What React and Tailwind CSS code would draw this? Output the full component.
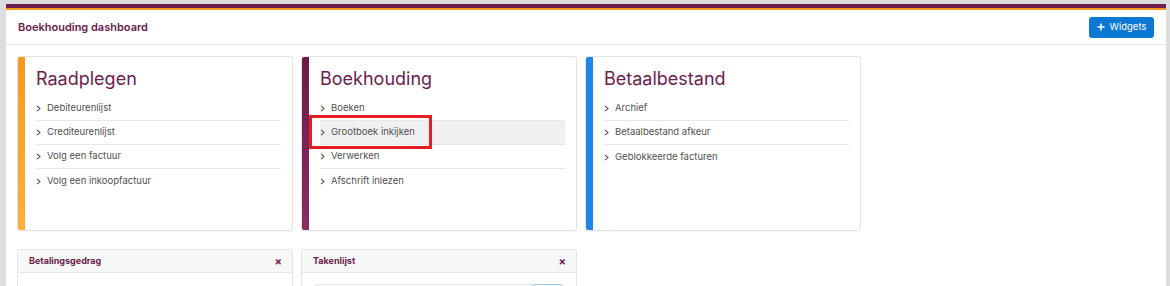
import React from 'react';

const groups = [
  {
    title: 'Raadplegen',
    bar: 'bg-gradient-to-b from-[#f59a1c] to-[#fbb03b]',
    items: ['Debiteurenlijst', 'Crediteurenlijst', 'Volg een factuur', 'Volg een inkoopfactuur'],
  },
  {
    title: 'Boekhouding',
    bar: 'bg-gradient-to-b from-[#6a1a4a] to-[#8a2c62]',
    items: ['Boeken', 'Grootboek inkijken', 'Verwerken', 'Afschrift inlezen'],
    active: 1,
  },
  {
    title: 'Betaalbestand',
    bar: 'bg-[#1d86e8]',
    items: ['Archief', 'Betaalbestand afkeur', 'Geblokkeerde facturen'],
  },
];

const Chevron = () => (
  <svg width="5" height="7" viewBox="0 0 5 7" className="shrink-0">
    <polyline points="1,0.8 4,3.5 1,6.2" fill="none" stroke="#555" strokeWidth="1.1" />
  </svg>
);

const GroupCard = ({ group }) => (
  <div className="w-[276px] h-[175px] flex rounded-[3px] border border-[#e3e3e3] bg-white overflow-hidden shadow-[0_1px_2px_rgba(0,0,0,0.04)]">
    <div className={`w-[7px] shrink-0 ${group.bar}`} />
    <div className="flex-1 pl-[11px] pr-[11px] pt-[10px]">
      <h2 className="text-[18px] leading-[24px] text-[#6b1d4c] mb-[6px]">{group.title}</h2>
      <ul>
        {group.items.map((item, i) => (
          <li
            key={item}
            className={`relative h-[24px] flex items-center gap-[6px] text-[9.5px] text-[#505050] ${
              i < group.items.length - 1 ? 'border-b border-[#e6e6e6]' : ''
            } ${group.active === i ? 'bg-[#f0f0f0]' : ''}`}
          >
            <Chevron />
            <span>{item}</span>
            {group.active === i && (
              <div className="absolute left-[-11px] top-[-6px] w-[123px] h-[34px] border-[3px] border-[#e31e24]" />
            )}
          </li>
        ))}
      </ul>
    </div>
  </div>
);

const WidgetCard = ({ title, children }) => (
  <div className="w-[276px] rounded-[3px] border border-[#e3e3e3] bg-white overflow-hidden">
    <div className="h-[23px] flex items-center justify-between pl-[11px] pr-[10px] bg-[#f7f7f7] border-b border-[#e6e6e6]">
      <span className="text-[9px] font-bold text-[#6b1d4c]">{title}</span>
      <span className="text-[11px] font-bold text-[#6b1d4c] leading-none">×</span>
    </div>
    <div className="h-[40px] px-[13px] pt-[11px]">{children}</div>
  </div>
);

export default function App() {
  return (
    <div className="h-[286px] overflow-hidden bg-[#dcdddf] pt-[4px] pl-[6px] pr-[4px]" style={{ fontFamily: 'Inter, "Noto Sans", sans-serif' }}>
      <div className="bg-white h-full">
        <div className="h-[4px] bg-[#6d1f4f]" />
        <div className="h-[2px] bg-[#f39a1e]" />
        <div className="h-[35px] flex items-center justify-between px-3 border-b border-[#e3e3e3]">
          <h1 className="text-[11px] font-semibold text-[#6b1d4c]">Boekhouding dashboard</h1>
          <button className="h-[21px] w-[65px] flex items-center justify-center gap-[5px] rounded-[3px] bg-[#0b78d4] text-white text-[9.5px]">
            <svg width="8" height="8" viewBox="0 0 8 8">
              <path d="M4 0.5v7M0.5 4h7" stroke="white" strokeWidth="1.5" />
            </svg>
            Widgets
          </button>
        </div>
        <div className="pt-[11px] pl-[11px]">
          <div className="flex gap-2">
            {groups.map((g) => (
              <GroupCard key={g.title} group={g} />
            ))}
          </div>
          <div className="flex gap-2 mt-[18px]">
            <WidgetCard title="Betalingsgedrag" />
            <WidgetCard title="Takenlijst">
              <div className="flex">
                <div className="flex-1 h-[22px] border border-[#e3e3e3] rounded-l-[3px]" />
                <div className="w-[30px] h-[22px] border border-[#9cc9f0] rounded-r-[3px]" />
              </div>
            </WidgetCard>
          </div>
        </div>
      </div>
    </div>
  );
}
